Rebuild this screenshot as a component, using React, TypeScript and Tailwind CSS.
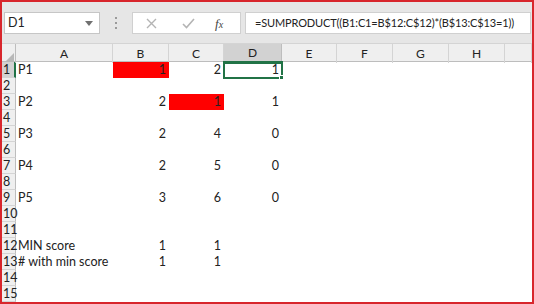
const cols = ["A", "B", "C", "D", "E", "F", "G", "H", ""];

type Cell = { v: string; red?: boolean };
const rows: Record<number, Cell[]> = {
  1: [{ v: "P1" }, { v: "1", red: true }, { v: "2" }, { v: "1" }],
  3: [{ v: "P2" }, { v: "2" }, { v: "1", red: true }, { v: "1" }],
  5: [{ v: "P3" }, { v: "2" }, { v: "4" }, { v: "0" }],
  7: [{ v: "P4" }, { v: "2" }, { v: "5" }, { v: "0" }],
  9: [{ v: "P5" }, { v: "3" }, { v: "6" }, { v: "0" }],
  12: [{ v: "MIN score" }, { v: "1" }, { v: "1" }, { v: "" }],
  13: [{ v: "# with min score" }, { v: "1" }, { v: "1" }, { v: "" }],
};

const grid = "grid grid-cols-[14px_97px_56px_55px_58px_55px_56px_56px_56px_1fr]";

function Toolbar() {
  return (
    <div className="h-[42px] bg-[#e6e6e6] border-b border-[#d4d4d4] flex items-center pl-[2px] pr-[1px] pt-[1px]">
      <div className="w-[96px] h-[22px] bg-white border border-[#c6c6c6] flex items-center justify-between pl-[3px] pr-[6px]">
        <span className="text-[12.5px] text-[#222]">D1</span>
        <svg width="8" height="5" viewBox="0 0 8 5">
          <path d="M0 0h8L4 5z" fill="#707070" />
        </svg>
      </div>
      <div className="w-[32px] flex flex-col items-center gap-[3px]">
        <span className="w-[2px] h-[2px] bg-[#9a9a9a]" />
        <span className="w-[2px] h-[2px] bg-[#9a9a9a]" />
        <span className="w-[2px] h-[2px] bg-[#9a9a9a]" />
      </div>
      <div className="w-[109px] h-[22px] bg-white border border-[#d0d0d0] flex items-center">
        <svg className="ml-[13px]" width="11" height="11" viewBox="0 0 11 11">
          <path d="M1 1l9 9M10 1l-9 9" stroke="#b4b4b4" strokeWidth="1.4" />
        </svg>
        <svg className="ml-[25px]" width="13" height="11" viewBox="0 0 13 11">
          <path d="M1 6l3.5 3.5L12 1" stroke="#b4b4b4" strokeWidth="1.6" fill="none" />
        </svg>
        <span className="ml-[20px] font-['Liberation_Serif',serif] italic text-[13px] text-[#444] leading-none">
          f<span className="text-[10px]">x</span>
        </span>
      </div>
      <div className="ml-[4px] flex-1 h-[22px] bg-white border border-[#d0d0d0] flex items-center pl-[9px]">
        <span className="text-[11px] tracking-[-0.15px] text-[#222] whitespace-nowrap">
          =SUMPRODUCT((B1:C1=B$12:C$12)*(B$13:C$13=1))
        </span>
      </div>
    </div>
  );
}

function Header() {
  return (
    <div className={`${grid} h-[18px] bg-[#efefef] border-b border-[#bdbdbd]`}>
      <div className="relative border-r border-[#bdbdbd]">
        <svg className="absolute right-[1px] bottom-[1px]" width="9" height="9" viewBox="0 0 9 9">
          <path d="M9 0v9H0z" fill="#b8b8b8" />
        </svg>
      </div>
      {cols.map((c, i) => (
        <div
          key={i}
          className={
            c === "D"
              ? "bg-[#d2d2d2] border-r border-[#bdbdbd] border-b-2 border-b-[#217346] -mb-px flex items-center justify-center text-[12px] text-[#222]"
              : "border-r border-[#d4d4d4] flex items-center justify-center text-[12px] text-[#222]"
          }
        >
          {c}
        </div>
      ))}
    </div>
  );
}

function Row({ n }: { n: number }) {
  const cells = rows[n] ?? [];
  return (
    <div className={`${grid} h-[16px]`}>
      <div
        className={
          n === 1
            ? "bg-[#d2d2d2] border-r-2 border-[#217346] border-b border-b-[#d4d4d4] pl-[1px] text-[12.5px] leading-[15px] text-[#222]"
            : "bg-[#efefef] border-r border-[#bdbdbd] border-b border-b-[#d4d4d4] pl-[1px] text-[12.5px] leading-[15px] text-[#222]"
        }
      >
        {n}
      </div>
      {cols.map((_, i) => {
        const c = cells[i];
        const isA = i === 0;
        return (
          <div
            key={i}
            className={`relative flex items-center text-[12.5px] text-[#222] leading-none ${
              isA ? "pl-[2px]" : "justify-end pr-[3px]"
            } ${c?.red ? "bg-[#ff0000]" : ""}`}
          >
            {c?.v}
            {n === 1 && i === 3 && (
              <div className="absolute -left-px -top-px -right-px -bottom-px border-2 border-[#217346]">
                <span className="absolute -right-[3px] -bottom-[3px] w-[5px] h-[5px] bg-[#217346] border border-white" />
              </div>
            )}
          </div>
        );
      })}
    </div>
  );
}

export default function App() {
  return (
    <div className="w-[534px] h-[304px] border-2 border-[#d8262c] bg-white overflow-hidden font-['Lato','Liberation_Sans',sans-serif]">
      <Toolbar />
      <Header />
      {Array.from({ length: 15 }, (_, i) => (
        <Row key={i} n={i + 1} />
      ))}
    </div>
  );
}
